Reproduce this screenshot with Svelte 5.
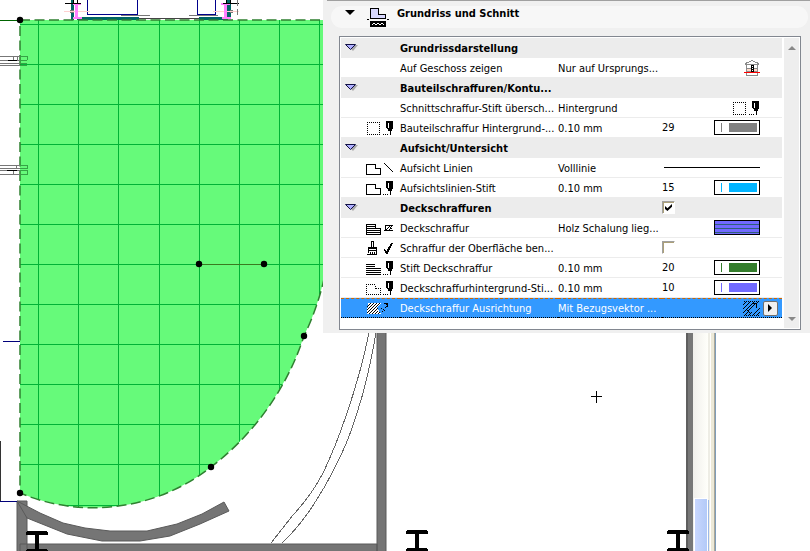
<script lang="ts">
	type Row = {
		id: string;
		kind?: 'group';
		label: string;
		value?: string;
		icon?: string;
		pen?: string;
		color?: string;
		preview?: string;
		check?: boolean;
		selected?: boolean;
	};

	let rows: Row[] = $state([
		{ id: 'display', kind: 'group', label: 'Grundrissdarstellung' },
		{ id: 'storey', label: 'Auf Geschoss zeigen', value: 'Nur auf Ursprungs...', preview: 'storey' },
		{ id: 'cut', kind: 'group', label: 'Bauteilschraffuren/Kontu...' },
		{ id: 'cutpen', label: 'Schnittschraffur-Stift übersch...', value: 'Hintergrund', preview: 'boxpen' },
		{ id: 'cutbg', label: 'Bauteilschraffur Hintergrund-...', value: '0.10 mm', icon: 'boxpen', pen: '29', color: '#808080' },
		{ id: 'view', kind: 'group', label: 'Aufsicht/Untersicht' },
		{ id: 'line', label: 'Aufsicht Linien', value: 'Volllinie', icon: 'slabline', preview: 'line' },
		{ id: 'linepen', label: 'Aufsichtslinien-Stift', value: '0.10 mm', icon: 'slabpen', pen: '15', color: '#00b4ff' },
		{ id: 'cover', kind: 'group', label: 'Deckschraffuren', check: true },
		{ id: 'fill', label: 'Deckschraffur', value: 'Holz Schalung lieg...', icon: 'fill', preview: 'wood' },
		{ id: 'surface', label: 'Schraffur der Oberfläche ben...', icon: 'brush', check: false },
		{ id: 'fillpen', label: 'Stift Deckschraffur', value: '0.10 mm', icon: 'linespen', pen: '20', color: '#347d2c' },
		{ id: 'fillbg', label: 'Deckschraffurhintergrund-Sti...', value: '0.10 mm', icon: 'dotspen', pen: '10', color: '#7169ff' },
		{ id: 'orient', label: 'Deckschraffur Ausrichtung', value: 'Mit Bezugsvektor ...', icon: 'orient', preview: 'vector', selected: true }
	]);

	const gridX = [38, 78, 118, 159, 199, 239, 279, 319];
	const gridY = [24, 64, 104, 144, 184, 224, 264, 304, 344, 384, 424, 464, 505];
	const nodes = [[20, 20], [20, 493], [199, 264], [264, 264], [304, 336], [211, 467]];
	const beams = [[26, 531], [406, 530], [667, 530]];
	const slab = 'M20 20H328V258A270 270 0 0 1 304 336A270 270 0 0 1 211 467A190 190 0 0 1 20 493Z';
</script>

{#snippet pen()}
	<path d="M20 2h2v7h1v1h-2v-1h-1zM22 2h5v8h-1v2h-1v4h-1v-4h-2v-2h1V4h-1z" />
	<path d="M17 15h1v1h-1zM19 15h1v1h-1zM21 15h1v1h-1z" />
{/snippet}

{#snippet slabShape()}
	<path class="stroke" d="M.5 5.5h9v4h5v6h-14z" />
{/snippet}

{#snippet icon(name: string)}
	<svg class="icon" width="28" height="18" viewBox="0 0 28 18" aria-hidden="true">
		{#if name === 'boxpen'}
			<path class="stroke dots" d="M1 3.5h13M1.5 3v13M13.5 3v13M1 15.5h13" />
			{@render pen()}
		{:else if name === 'slabline'}
			{@render slabShape()}
			<path class="stroke" d="M18 4l9 9" />
		{:else if name === 'slabpen'}
			{@render slabShape()}
			{@render pen()}
		{:else if name === 'fill'}
			{@render slabShape()}
			<path class="stroke" d="M1 7.5h9M1 9.5h9M1 11.5h13M1 13.5h13" />
			<path class="stroke" d="M19 6.5h8M18 11.500h9M19.500 7v4M25.500 7v1M24.500 8v1M25.500 9v1M20 11l4-4M23 11l2-2" />
		{:else if name === 'brush'}
			<path class="stroke" d="M5.500 8V2.500h2V8M2.500 8.500h8v3h-8zM2.500 12v2M1 15.500h9.500V12M4.500 13v2M6.500 13v2M8.500 13v2" />
			<path d="M3 9h7v1h-7zM18 10h1v1h1v1h1v-2h1v-2h1v-1h1v-2h1v-1h2v1h-1v2h-1v2h-1v2h-1v2h-1v2h-2v-1h-1v-2h-1z" />
		{:else if name === 'linespen'}
			<path class="stroke" d="M0 5.500h9M0 7.500h9M0 9.500h15M0 11.500h15M0 13.500h15M0 15.500h15" />
			{@render pen()}
		{:else if name === 'dotspen'}
			<path class="stroke dots" d="M0 5.500h9v4h6M.5 5v11M0 15.500h15M14.500 9v7" />
			{@render pen()}
		{:else if name === 'orient'}
			<path d="M2 4h13l-4 5 4 6H1z" fill="#fff" />
			<path class="stroke" d="M1 8l4-4M1 11l7-7M1 14l10-10M3 15l11-11M6 15l6-6M9 15l3-3M12 15l2-2" />
			<path d="M16 12h1v1h-1zM17 10h1v1h-1zM18 11h1v1h-1zM19 8h1v1h-1zM20 7h1v1h-1zM18 4h4v4h-1V6h-1V5h-2zM15 9h1v1h-1z" />
		{/if}
	</svg>
{/snippet}

<main class="workspace">
	<svg class="plan" role="img" aria-label="Grundriss">
		<defs>
			<clipPath id="slab"><path d={slab} /></clipPath>
			<linearGradient id="track"><stop offset="0" stop-color="#f0efeb" /><stop offset="1" stop-color="#fffffa" /></linearGradient>
			<linearGradient id="thumb"><stop offset="0" stop-color="#c8d6fd" /><stop offset="1" stop-color="#b3caf8" /></linearGradient>
		</defs>

		<!-- window and columns along the upper wall -->
		<g shape-rendering="crispEdges" fill="none">
			<path d="M87.500 0v14.500h50V0M197.500 0v14.500h18V0" stroke="#00008b" />
			<path d="M71 0h3v20h-3zM77 17h62v3h-62zM199 17h29v3h-29zM227 0h4v19h-4z" fill="#006565" />
			<path d="M64 11.500h26M213 11.500h26" stroke="#ffd0d0" />
			<path d="M75 3h3v14h4v2h-9v-2h2zM73 3h8v2h-8zM224 3h3v14h4v2h-9v-2h2zM221 3h9v2h-9z" fill="#ff80ff" />
			<path d="M65 3.500h16M223 3.500h16M73.500 0v3M77.500 0v3M226.500 0v3M230.500 0v3" stroke="#000" />
			<path d="M121 15.500h29M189 15.500h29M237.500 0v6M237.500 9v6M70 10.500h4M70 12.500h4M230 10.500h3M230 12.500h3" stroke="#777" />
			<path d="M139 18.500h60" stroke="#444" />
		</g>

		<!-- outer walls -->
		<path d="M377 300H386V560H377zM20 544H377V560H20zM17 501H27V560H17z" class="wall" />
		<path d="M17 501L40 513L63 523L85 528L110 531H147L177 524L202 514L224 502L229 511L200 524L170 536L140 541H102L67 534L27 518Z" class="wall" />
		<path d="M369 333Q361 372 347 413Q336 446 323 473Q311 496 293 515L271 543M376 333Q368 380 357 413Q349 440 337 463Q325 488 310 510Q297 529 282 543" class="thin" />

		<path d={slab} fill="#66fa7a" />
		<g clip-path="url(#slab)" shape-rendering="crispEdges" stroke="#00b336">
			{#each gridX as x}
				<line x1={x + 0.5} x2={x + 0.5} y1="20" y2="510" />
			{/each}
			{#each gridY as y}
				<line x1="20" x2="328" y1={y + 0.5} y2={y + 0.5} />
			{/each}
		</g>
		<path d={slab} fill="none" stroke="#2f8030" stroke-width="1.5" stroke-dasharray="10 4.500" />
		<g shape-rendering="crispEdges" fill="none">
			<path d="M199 264.500h65" stroke="#3a7a20" />
			<path d="M0 20.500h20" stroke="#006400" />
			<path d="M3 341.500h17M0 501.500h17" stroke="#00007a" />
			<path d="M.5 441v60" stroke="#333" />
			<path d="M0 56.500h20M0 60.500h20M0 63.500h20M0 65.500h20M13.500 56v4M17.500 56v4M0 165.500h20M0 168.500h20M0 170.500h20M0 174.500h20M13.500 170v4M16.500 165v3" stroke="#777" />
			<path d="M20 56.500h7.500v3M20 60.500h7M20 63.500h7M20 65.500h7M20 165.500h7.500v3M20 168.500h7M20 170.500h7.500v4h-7" stroke="#35a345" />
			<path d="M8 60.500h9M7 170.500h10" stroke="#000" />
		</g>
		{#each nodes as [x, y]}
			<circle cx={x} cy={y} r="3.200" />
		{/each}

		<!-- right edge with the scrollbar of the section window -->
		<g shape-rendering="crispEdges">
			<rect x="686" width="7" height="100%" fill="#777" />
			<rect x="686" width="2" height="100%" fill="#5e5e5e" />
			<rect x="693" width="15" height="100%" fill="url(#track)" />
			<rect x="708" width="2" height="100%" fill="#eeede5" />
			<rect x="711" width="3" height="100%" fill="#ece9d8" />
			<rect x="714" width="1" height="100%" fill="#aca899" />
			<rect x="715" width="1" height="100%" fill="#7f9db9" />
			<rect x="694" y="498" width="14" height="100%" fill="#fff" />
			<rect x="695" y="499" width="12" height="100%" fill="url(#thumb)" />
			<rect x="708" y="500" width="1" height="100%" fill="#9db9e8" />
		</g>
		<g shape-rendering="crispEdges">
			{#each beams as [x, y]}
				<path d="M{x + 1} {y}h20v1h1v3h-9v14h8v1h1v3h-22v-3h1v-1h8v-14h-9v-3h1z" />
			{/each}
			<path d="M591 396.500h11M596.500 391v12" stroke="#000" />
		</g>
	</svg>

	<section class="palette">
		<header>
			<h1>
				<button class="title" type="button">
					<svg width="12" height="6" viewBox="0 0 12 6" aria-hidden="true"><path d="M1 0h10L6 5z" /></svg>
					<svg class="crisp" width="22" height="20" viewBox="0 0 22 20" aria-hidden="true">
						<path d="M3.500 1.500h8v6h7v4h-15z" fill="#d9d9ff" stroke="#000" />
						<path d="M0 12h2v1H0zM20 12h2v1h-2zM3 14h16v6H3z" />
						<path d="M5 18l2-2 2 2 2-2 2 2 2-2 2 2" fill="none" stroke="#fff" />
					</svg>
					<span>Grundriss und Schnitt</span>
				</button>
			</h1>
		</header>

		<div class="list">
			<table>
				<colgroup>
					<col class="col-icon" /><col class="col-label" /><col /><col class="col-preview" />
				</colgroup>
				<tbody>
					{#each rows as row (row.id)}
						<tr class:group={row.kind === 'group'} class:selected={row.selected}>
							<td class="lead">
								{#if row.kind === 'group'}
									<button class="toggle" type="button" aria-label={row.label}>
										<svg width="14" height="9" viewBox="0 0 14 9" aria-hidden="true">
											<path d="M2 2h11L8 8z" fill="#aaa" />
											<path d="M.5 1.500h10L5.500 6.500z" fill="#b0b0ff" stroke="#111144" />
										</svg>
									</button>
								{:else if row.icon}
									{@render icon(row.icon)}
								{/if}
							</td>
							<th class="text" scope="row" colspan={row.value ? 1 : 2}>
								{#if row.check !== undefined}
									<label for={row.id}>{row.label}</label>
								{:else}
									{row.label}
								{/if}
							</th>
							{#if row.value}
								<td class="text">{row.value}</td>
							{/if}
							<td>
								<div class="setting">
									<div class="preview">
										{#if row.check !== undefined}
											<input id={row.id} type="checkbox" bind:checked={row.check} />
										{:else if row.pen}
											<span>{row.pen}</span>
											<button class="swatch" type="button" aria-label="Stift {row.pen}" style="color: {row.color}">
												<i class="nib"></i><i class="bar"></i>
											</button>
										{:else if row.preview === 'line'}
											<i class="rule"></i>
										{:else if row.preview === 'wood'}
											<button class="swatch wood" type="button" aria-label={row.value}></button>
										{:else if row.preview === 'boxpen'}
											{@render icon('boxpen')}
										{:else if row.preview === 'storey'}
											<svg class="crisp" width="16" height="18" viewBox="0 0 16 18" aria-hidden="true">
												<path d="M2 13h12v-4H2z" fill="#ffd9c9" />
												<path d="M1 5.500h14M2.500 5v11h11V5M3 9.500h10M3 12.500h10M1 4.500l3-1 4-2 4 2 3 1" fill="none" stroke="#8b8b8b" />
												<path d="M7 6h3v8H7z" />
												<path d="M8 7h1v1H8zM8 9h1v1H8zM8 11h1v1H8z" fill="#fff" />
												<path d="M0 13h16v1H0z" fill="#f00" />
											</svg>
										{:else if row.preview === 'vector'}
											<svg class="crisp" width="18" height="18" viewBox="0 0 18 18" aria-hidden="true">
												<path class="stroke dots" d="M2 2.500h16M2 16.500h16" />
												<path class="stroke" d="M1 6l4-4M1 10l8-8M1 14L13 2M3 16l3-3M7 16l3-3M11 16l7-7M15 16l3-3M14 5l3-3" />
												<path class="stroke" d="M6 12l8-8M10 4.500h4.500v4M4 10l5 5" />
											</svg>
										{/if}
									</div>
									{#if row.selected}
										<button class="more" type="button" aria-label="Auswahl öffnen">
											<svg width="5" height="8" viewBox="0 0 5 8" aria-hidden="true"><path d="M0 0l4 4-4 4z" /></svg>
										</button>
									{/if}
								</div>
							</td>
						</tr>
					{/each}
				</tbody>
			</table>
			<div class="scrollbar">
				<button type="button" aria-label="Nach oben">
					<svg width="8" height="5" viewBox="0 0 8 5" aria-hidden="true"><path d="M0 5l4-4 4 4z" fill="#888" /></svg>
				</button>
				<button type="button" aria-label="Nach unten">
					<svg width="8" height="5" viewBox="0 0 8 5" aria-hidden="true"><path d="M0 0l4 4 4-4z" fill="#888" /></svg>
				</button>
			</div>
		</div>
	</section>
</main>

<style>
	:global(body) { margin: 0; background: #fff; }

	.workspace {
		display: grid;
		grid-template-columns: 323px 1fr;
		grid-template-rows: minmax(100vh, auto);
		font-family: "DejaVu Sans Condensed", "Noto Sans", sans-serif;
		font-size: 11px;
		line-height: 16px;
		color: #000;
	}

	.plan {
		grid-area: 1 / 1 / 2 / 3;
		width: 100%;
		height: 100%;
	}
	.wall { fill: #757575; stroke: #5a5a5a; stroke-width: 1; }
	.thin { fill: none; stroke: #666; shape-rendering: crispEdges; }

	.palette {
		grid-area: 1 / 2;
		align-self: start;
		background: #f0f0f0;
		padding-bottom: 3px;
	}
	.palette header {
		margin-left: 4px;
		border-top: 1px solid #a0a0a0;
		padding: 5px 2px 8px 4px;
	}

	button {
		font: inherit;
		color: inherit;
		padding: 0;
		border: 0;
		background: none;
	}

	h1 { margin: 0; font-size: 11px; }
	.title {
		display: flex;
		align-items: center;
		width: 100%;
		height: 22px;
		padding-left: 13px;
		border-radius: 11px;
		background: #f7f7f7;
		font-weight: bold;
	}
	.title svg:first-child { margin-bottom: 8px; }
	.title svg + svg { margin-left: 11px; }
	.title span { margin-left: 8px; padding-bottom: 6px; }

	.list {
		display: flex;
		margin: 0 9px 0 16px;
		padding: 1px;
		border: 1px solid #828790;
		background: #fff;
	}

	table {
		flex: 1;
		table-layout: fixed;
		border-collapse: separate;
		border-spacing: 0;
		width: 0;
		margin-bottom: 10px;
	}
	.col-icon { width: 59px; }
	.col-label { width: 158px; }
	.col-preview { width: 120px; }

	td, th {
		height: 19px;
		padding: 0;
		border-bottom: 1px solid #ececec;
		font-weight: normal;
		text-align: left;
		white-space: nowrap;
		vertical-align: middle;
	}
	.text { height: 17px; padding-top: 2px; }
	.lead { padding-left: 25px; }
	.group td, .group th { background: #ececec; }
	.group th { font-weight: bold; }
	.group .lead { padding-left: 4px; }
	.selected td, .selected th {
		height: 18px;
		background: #39f;
		color: #fff;
		border-top: 1px dashed #c60;
		border-bottom: 1px dotted #000;
	}
	.selected .text { height: 16px; }

	svg { display: block; }
	.icon, .crisp { shape-rendering: crispEdges; }
	.stroke { fill: none; stroke: #000; }
	.dots { stroke-dasharray: 1 1; }

	.setting { display: flex; align-items: center; gap: 3px; }
	.preview {
		display: flex;
		align-items: center;
		justify-content: flex-end;
		width: 98px;
	}
	.preview span { margin-right: auto; }
	.rule { width: 96px; height: 1px; background: #000; }

	.swatch {
		display: flex;
		align-items: center;
		gap: 7px;
		box-sizing: border-box;
		width: 46px;
		height: 15px;
		padding-left: 6px;
		border: 1px solid #000;
		background: #fff;
	}
	.nib { width: 1px; height: 9px; background: currentColor; }
	.bar { width: 28px; height: 9px; background: currentColor; }
	.wood { background: repeating-linear-gradient(#7169ff 0 3px, #2f5f7a 3px 4px); }

	input {
		appearance: none;
		display: grid;
		place-items: center;
		width: 13px;
		height: 13px;
		margin: 0 auto 0 0;
		border: 1px solid #fff;
		border-top-color: #a0a0a0;
		border-left-color: #a0a0a0;
		background: #fff;
		box-shadow: inset 1px 1px #aca078;
	}
	input:checked::before {
		content: "";
		width: 7px;
		height: 7px;
		background: #000;
		clip-path: polygon(0 30%, 35% 60%, 100% 0, 100% 40%, 35% 100%, 0 70%);
	}

	.toggle { display: block; }

	.more {
		display: grid;
		place-items: center;
		width: 15px;
		height: 15px;
		border: 1px solid #707070;
		border-radius: 2px;
		background: #f0f0f0;
		color: #000;
		box-sizing: border-box;
	}

	.scrollbar {
		display: flex;
		flex-direction: column;
		justify-content: space-between;
		width: 15px;
		margin-left: 2px;
		background: #eee;
	}
	.scrollbar button { display: grid; place-items: center; height: 18px; }
</style>
